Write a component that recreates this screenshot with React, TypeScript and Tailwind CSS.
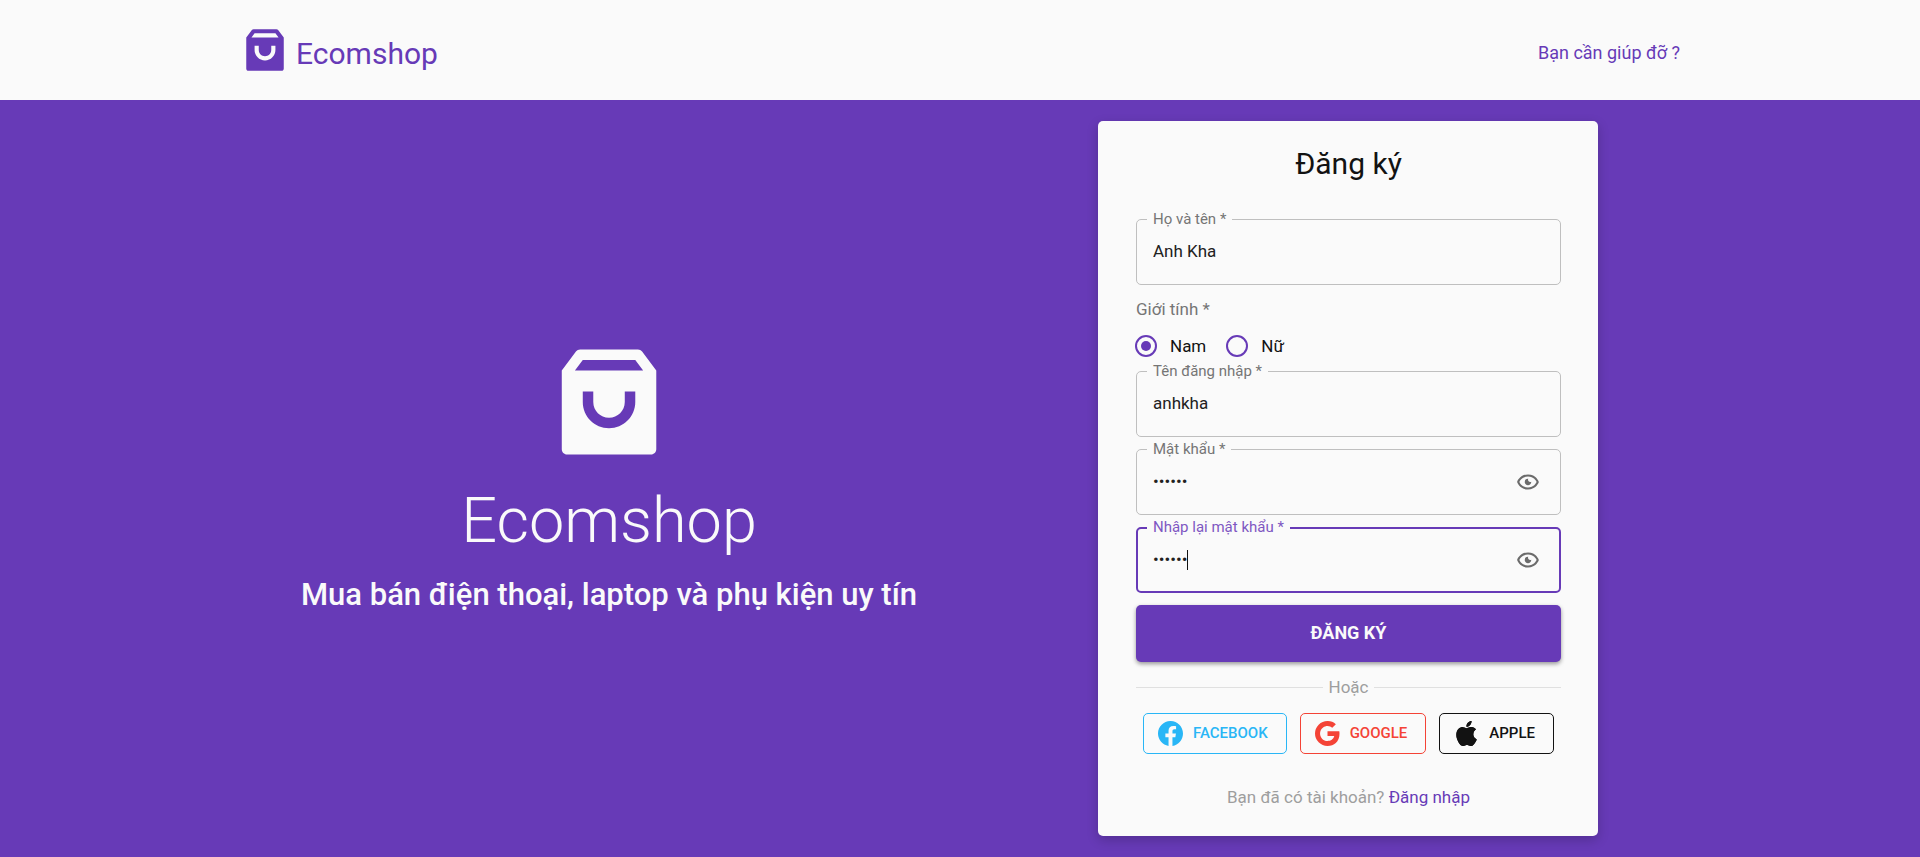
import { useState, type ReactNode } from "react";
import { RiShoppingBag3Fill } from "react-icons/ri";
import { BiShowAlt } from "react-icons/bi";
import { BsApple, BsFacebook, BsGoogle } from "react-icons/bs";

type FieldProps = {
  id: string;
  label: string;
  type?: string;
  initial: string;
  focused?: boolean;
};

function Field({ id, label, type = "text", initial, focused = false }: FieldProps) {
  const [value, setValue] = useState(initial);
  const [visible, setVisible] = useState(false);
  const isPassword = type === "password";
  const showCaret = focused && !visible && value === initial;
  return (
    <fieldset className="group min-w-0 rounded-[5px] border border-[#bfbfbf] focus-within:border-2 focus-within:border-[#673ab7]">
      <legend className="ml-2.5 flex h-0 items-center px-1.5 text-[15px] leading-4 text-[#757575] group-focus-within:ml-[9px] group-focus-within:text-[#7e57c2]">
        <label htmlFor={id} className="pb-0.5">
          {label} *
        </label>
      </legend>
      <div className="flex h-16 items-center pr-[19px] pl-4 group-focus-within:h-[62px] group-focus-within:pr-[18px] group-focus-within:pl-[15px]">
        <div className="relative flex flex-1 items-center">
          <input
            id={id}
            type={isPassword && !visible ? "password" : "text"}
            value={value}
            onChange={(e) => setValue(e.target.value)}
            autoFocus={focused}
            className={
              "h-6 w-full min-w-0 bg-transparent text-[17px] text-[#212121] outline-none " +
              (showCaret ? "caret-transparent" : "")
            }
          />
          {showCaret && <span className="absolute left-[34px] hidden h-5 w-px bg-[#121212] group-focus-within:block" />}
        </div>
        {isPassword && (
          <button type="button" aria-label="Hiện mật khẩu" onClick={() => setVisible(!visible)}>
            <BiShowAlt className="size-[26px] text-[#6b6b6b]" />
          </button>
        )}
      </div>
    </fieldset>
  );
}

function Gender({ id, label, checked = false }: { id: string; label: string; checked?: boolean }) {
  return (
    <div className="flex items-center gap-[13px]">
      <input
        id={id}
        type="radio"
        name="gender"
        defaultChecked={checked}
        className="grid size-[22px] appearance-none place-items-center rounded-full border-2 border-[#673ab7] before:size-2.5 before:rounded-full checked:before:bg-[#673ab7]"
      />
      <label htmlFor={id} className="text-[17px] leading-[22px] text-[#121212]">
        {label}
      </label>
    </div>
  );
}

function Social({ icon, label, tone }: { icon: ReactNode; label: string; tone: string }) {
  return (
    <button
      type="button"
      className={
        "flex h-[41px] items-center gap-2.5 rounded-[5px] border border-current pr-[18px] pl-3.5 text-[15px] font-medium uppercase " +
        tone
      }
    >
      {icon}
      {label}
    </button>
  );
}

export default function App() {
  return (
    <div className="flex min-h-screen flex-col bg-[#673ab7] font-['Roboto',sans-serif]">
      <header className="bg-[#fafafa]">
        <div className="mx-auto flex h-[100px] max-w-[1440px] items-center justify-between text-[#673ab7]">
          <a href="#" className="flex items-center gap-1.5">
            <RiShoppingBag3Fill className="size-[50px]" />
            <span className="pt-2 text-[30px] leading-9">Ecomshop</span>
          </a>
          <a href="#" className="pt-1.5 text-[18px] leading-7">
            Bạn cần giúp đỡ ?
          </a>
        </div>
      </header>

      <main className="mx-auto flex w-full max-w-[1440px] flex-1 items-center gap-[120px] pr-[82px]">
        <section className="flex flex-1 flex-col items-center text-[#fafafa]">
          <RiShoppingBag3Fill className="size-[126px]" />
          <h1 className="mt-4 text-[63px] leading-[80px] font-light">Ecomshop</h1>
          <p className="mt-2.5 text-[31px] leading-[48px] font-medium">
            Mua bán điện thoại, laptop và phụ kiện uy tín
          </p>
        </section>

        <form
          onSubmit={(e) => e.preventDefault()}
          className="w-[500px] rounded-[5px] bg-[#fafafa] pt-5 pr-[37px] pb-[26px] pl-[38px] shadow-[0_4px_12px_rgba(0,0,0,0.2)]"
        >
          <h2 className="mb-[33px] text-center text-[30px] leading-[45px] text-[#121212]">Đăng ký</h2>

          <Field id="fullname" label="Họ và tên" initial="Anh Kha" />

          <div role="radiogroup" aria-labelledby="gender-label" className="my-3">
            <p id="gender-label" className="mb-3.5 text-[17px] leading-6 text-[#757575]">
              Giới tính *
            </p>
            <div className="-ml-px flex gap-5 pb-0.5">
              <Gender id="male" label="Nam" checked />
              <Gender id="female" label="Nữ" />
            </div>
          </div>

          <div className="flex flex-col gap-3">
            <Field id="username" label="Tên đăng nhập" initial="anhkha" />
            <Field id="password" label="Mật khẩu" type="password" initial="123456" />
            <Field id="confirm" label="Nhập lại mật khẩu" type="password" initial="123456" focused />
            <button
              type="submit"
              className="h-[57px] rounded-[5px] bg-[#673ab7] pb-0.5 text-[18px] font-bold text-[#fafafa] uppercase shadow-[0_2px_4px_rgba(0,0,0,0.4)]"
            >
              Đăng ký
            </button>
          </div>

          <div className="mt-3 mb-[13px] flex items-center gap-1.5 text-[17px] leading-[26px] text-[#9e9e9e]">
            <span className="h-px flex-1 bg-[#e0e0e0]" />
            Hoặc
            <span className="h-px flex-1 bg-[#e0e0e0]" />
          </div>

          <div className="flex justify-center gap-[13px]">
            <Social icon={<BsFacebook className="size-[25px]" />} label="Facebook" tone="text-[#29b6f6]" />
            <Social icon={<BsGoogle className="size-[25px]" />} label="Google" tone="text-[#f44336]" />
            <Social icon={<BsApple className="size-[25px]" />} label="Apple" tone="text-[#121212]" />
          </div>

          <p className="mt-[31px] text-center text-[17px] leading-[25px] text-[#9e9e9e]">
            Bạn đã có tài khoản?{" "}
            <a href="#" className="text-[#673ab7]">
              Đăng nhập
            </a>
          </p>
        </form>
      </main>
    </div>
  );
}
